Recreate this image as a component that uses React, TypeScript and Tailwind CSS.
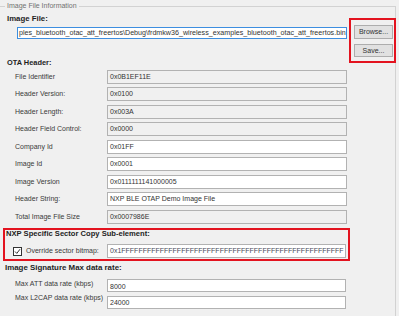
import React from "react";

type Row = { label: string; value: string; ro: boolean };

const rows: Row[] = [
  { label: "File Identifier", value: "0x0B1EF11E", ro: true },
  { label: "Header Version:", value: "0x0100", ro: true },
  { label: "Header Length:", value: "0x003A", ro: true },
  { label: "Header Field Control:", value: "0x0000", ro: true },
  { label: "Company Id", value: "0x01FF", ro: false },
  { label: "Image Id", value: "0x0001", ro: false },
  { label: "Image Version", value: "0x0111111141000005", ro: false },
  { label: "Header String:", value: "NXP BLE OTAP Demo Image File", ro: false },
  { label: "Total Image File Size", value: "0x0007986E", ro: true },
];

const bitmap = "0x1" + "F".repeat(52);

export default function App() {
  return (
    <div className="w-[399px] h-[316px] bg-[#f0f0f0] overflow-hidden text-[7px] text-[#333] font-['Liberation_Sans',Arial,sans-serif]">
      <fieldset className="w-[396px] h-[340px] border-t border-r border-[#d2d2d2] min-w-0">
        <legend className="ml-[5px] px-[2px] text-[7px] leading-[12px] text-[#707070]">
          Image File Information
        </legend>
        <div className="flex">
          <div className="w-[349px] flex flex-col">
            <div className="pl-[7px] mt-[2px] font-bold text-[7.8px] leading-[10px] text-[#1e1e1e]">
              Image File:
            </div>
            <div className="ml-[17px] mt-[3px] w-[330px] h-[12px] bg-white border border-[#3d8ee0] flex items-center overflow-hidden">
              <span className="pl-[1px] whitespace-nowrap text-[7.15px] leading-[10px] text-[#333]">
                ples_bluetooth_otac_att_freertos\Debug\frdmkw36_wireless_examples_bluetooth_otac_att_freertos.bin
              </span>
            </div>
            <div className="pl-[7px] mt-[18.5px] font-bold text-[7.4px] leading-[10px] text-[#1e1e1e]">
              OTA Header:
            </div>
            <div className="mt-[2px] flex flex-col gap-[3.5px]">
              {rows.map((r) => (
                <div key={r.label} className="flex items-center h-[14px]">
                  <div className="w-[107px] pl-[15px] whitespace-nowrap leading-[10px] text-[#3a3a3a]">
                    {r.label}
                  </div>
                  <div
                    className={
                      "w-[240px] h-[14px] border border-[#b2b2b2] flex items-center overflow-hidden " +
                      (r.ro ? "bg-[#f0f0f0]" : "bg-white")
                    }
                  >
                    <span className="pl-[2px] whitespace-nowrap leading-[10px] text-[#333]">{r.value}</span>
                  </div>
                </div>
              ))}
            </div>
            <div className="ml-[3px] mt-[4.5px] w-[347px] h-[33px] border-2 border-[#e3131f] flex flex-col">
              <div className="pl-[1px] font-bold text-[7.6px] leading-[8px] whitespace-nowrap text-[#1e1e1e]">
                NXP Specific Sector Copy Sub-element:
              </div>
              <div className="mt-[6px] flex items-center h-[14px]">
                <div className="w-[102px] flex items-center">
                  <div className="ml-[8px] w-[9px] h-[9px] border border-[#333] bg-white flex items-center justify-center">
                    <svg width="7" height="7" viewBox="0 0 7 7">
                      <path d="M1 3.5 L2.8 5.4 L6 1.2" fill="none" stroke="#333" strokeWidth="1" />
                    </svg>
                  </div>
                  <span className="ml-[4px] whitespace-nowrap leading-[10px] text-[#3a3a3a]">
                    Override sector bitmap:
                  </span>
                </div>
                <div className="w-[239px] h-[14px] bg-white border border-[#b2b2b2] flex items-center overflow-hidden">
                  <span className="pl-[2px] whitespace-nowrap leading-[10px] text-[#4a4a5a]">{bitmap}</span>
                </div>
              </div>
            </div>
            <div className="pl-[5px] mt-[2px] font-bold text-[7.9px] leading-[10px] whitespace-nowrap text-[#1e1e1e]">
              Image Signature Max data rate:
            </div>
            <div className="mt-[6px] flex items-start h-[13px]">
              <div className="w-[107px] pl-[15px] whitespace-nowrap leading-[10px] text-[#3a3a3a]">
                Max ATT data rate (kbps)
              </div>
              <div className="w-[239px] h-[13px] bg-white border border-[#b2b2b2] flex items-center overflow-hidden">
                <span className="pl-[2px] pt-[2px] whitespace-nowrap leading-[10px] text-[#333]">8000</span>
              </div>
            </div>
            <div className="mt-[4px] flex items-start h-[13px]">
              <div className="w-[107px] pl-[15px] -mt-[3px] whitespace-nowrap leading-[10px] text-[#3a3a3a]">
                Max L2CAP data rate (kbps)
              </div>
              <div className="w-[239px] h-[13px] bg-white border border-[#b2b2b2] flex items-center overflow-hidden">
                <span className="pl-[2px] pt-[1px] whitespace-nowrap leading-[10px] text-[#333]">24000</span>
              </div>
            </div>
          </div>
          <div className="flex flex-col">
            <div className="mt-[6px] w-[47px] h-[45px] border-2 border-[#e3131f] flex flex-col pl-[3px] pt-[5px]">
              <div className="w-[39px] h-[14px] bg-[#e1e1e1] border border-[#adadad] flex items-center justify-center leading-[10px] text-[#333]">
                Browse...
              </div>
              <div className="mt-[5px] w-[39px] h-[13px] bg-[#e1e1e1] border border-[#adadad] flex items-center justify-center leading-[10px] text-[#333]">
                Save...
              </div>
            </div>
          </div>
        </div>
      </fieldset>
    </div>
  );
}
